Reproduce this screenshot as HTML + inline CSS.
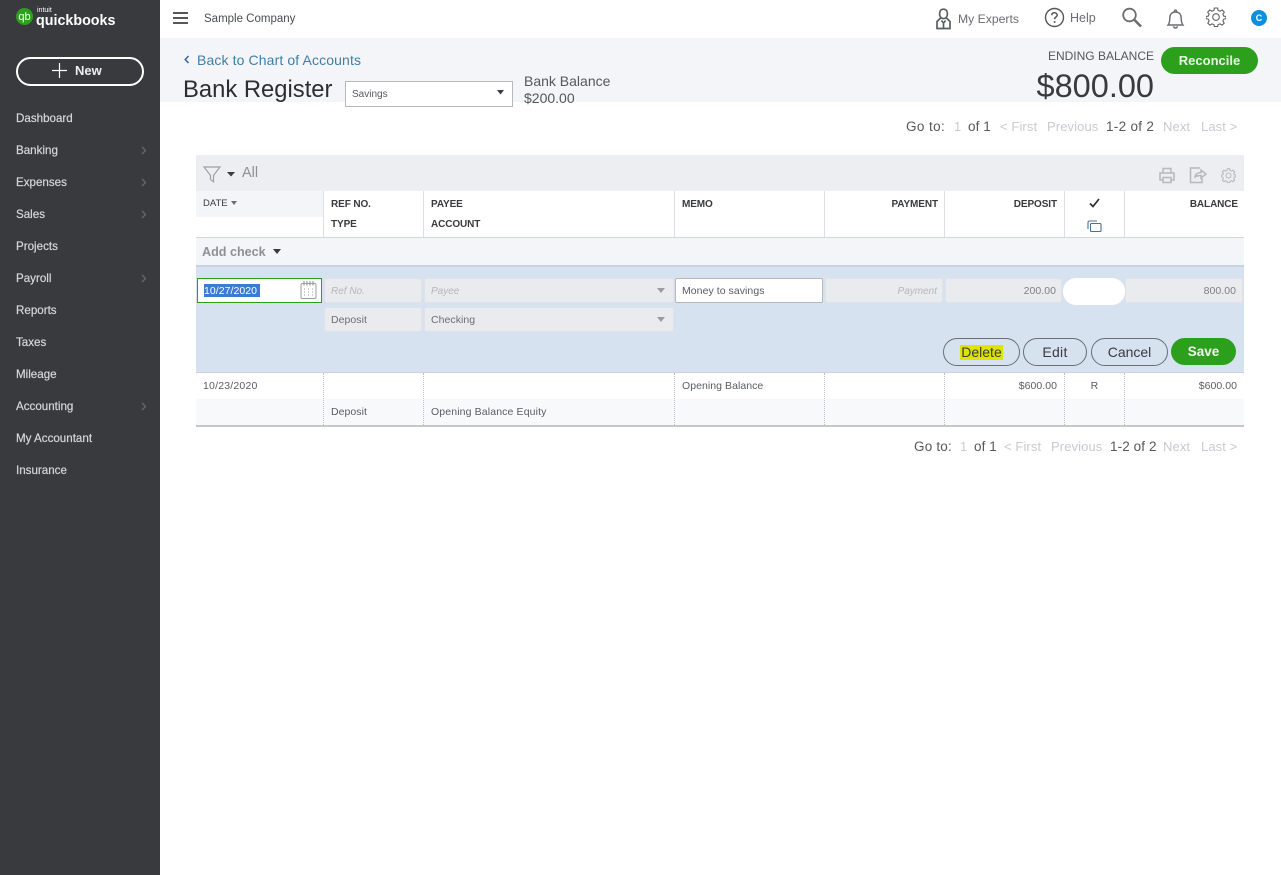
<!DOCTYPE html>
<html><head><meta charset="utf-8"><title>Bank Register</title>
<style>
html,body{margin:0;padding:0;background:#fff}
#p{position:relative;width:1281px;height:875px;overflow:hidden;background:#fff;font-family:"Liberation Sans",sans-serif;color:#393a3d}
#p div,#p svg{position:absolute}
.t{white-space:nowrap;line-height:16px;height:16px}
.r{text-align:right}
.n{font-size:11.6px;color:#d4d7dc;left:16px;font-weight:400;-webkit-text-stroke:.2px #d4d7dc}
.h{font-size:10px;font-weight:700;color:#393a3d;letter-spacing:-.1px}
.b{font-size:10.5px;color:#5a5c60;letter-spacing:.05px}
.pg{font-size:13.5px;color:#55575b;letter-spacing:.1px}
.pg.g{color:#c8cacf;font-size:13px}
.i{background:#e9ebee;border:1px solid #dfe2e7;box-sizing:border-box;border-radius:2px}
.pill{box-sizing:border-box;border:1px solid #6b6e73;border-radius:14px;height:28px;top:338px;text-align:center;font-size:14px;line-height:26px;color:#393a3d;background:#d7e2f0}
.v{width:1px;background:#dcdfe3}
.d{width:0;border-left:1px dotted #bcbfc4}
</style></head><body><div id="p">

<div style="left:0;top:0;width:160px;height:875px;background:#393a3d"></div>
<div style="left:16px;top:8px;width:17px;height:17px;border-radius:50%;background:#2ca01c"></div>
<div class="t" style="left:16px;top:9px;width:17px;text-align:center;font-size:11px;color:#fff;line-height:16px">qb</div>
<div class="t" style="left:37px;top:6px;font-size:7px;line-height:10px;height:10px;color:#fff">intuit</div>
<div class="t" style="left:36px;top:13px;font-size:14.3px;font-weight:700;color:#fff">quickbooks</div>

<div style="left:16px;top:57px;width:128px;height:29px;box-sizing:border-box;border:2px solid #fff;border-radius:15px"></div>
<svg style="left:52px;top:63px" width="15" height="15"><path d="M7.5 0V15M0 7.5H15" stroke="#fff" stroke-width="1.2"/></svg>
<div class="t" style="left:75px;top:63px;font-size:13px;font-weight:700;color:#eceef1">New</div>

<div class="t n" style="top:111px">Dashboard</div>
<div class="t n" style="top:143px">Banking</div>
<div class="t n" style="top:175px">Expenses</div>
<div class="t n" style="top:207px">Sales</div>
<div class="t n" style="top:239px">Projects</div>
<div class="t n" style="top:271px">Payroll</div>
<div class="t n" style="top:303px">Reports</div>
<div class="t n" style="top:335px">Taxes</div>
<div class="t n" style="top:367px">Mileage</div>
<div class="t n" style="top:399px">Accounting</div>
<div class="t n" style="top:431px">My Accountant</div>
<div class="t n" style="top:463px">Insurance</div>
<svg style="left:141px;top:146px" width="6" height="9"><path d="M1 1L4.5 4.5L1 8" fill="none" stroke="#65666a" stroke-width="1.4"/></svg>
<svg style="left:141px;top:178px" width="6" height="9"><path d="M1 1L4.5 4.5L1 8" fill="none" stroke="#65666a" stroke-width="1.4"/></svg>
<svg style="left:141px;top:210px" width="6" height="9"><path d="M1 1L4.5 4.5L1 8" fill="none" stroke="#65666a" stroke-width="1.4"/></svg>
<svg style="left:141px;top:274px" width="6" height="9"><path d="M1 1L4.5 4.5L1 8" fill="none" stroke="#65666a" stroke-width="1.4"/></svg>
<svg style="left:141px;top:402px" width="6" height="9"><path d="M1 1L4.5 4.5L1 8" fill="none" stroke="#65666a" stroke-width="1.4"/></svg>

<div style="left:173px;top:12px;width:15px;height:2px;background:#55575b"></div>
<div style="left:173px;top:17px;width:15px;height:2px;background:#55575b"></div>
<div style="left:173px;top:22px;width:15px;height:2px;background:#55575b"></div>
<div class="t" style="left:204px;top:11px;font-size:11.5px;color:#4a4c50">Sample Company</div>

<svg style="left:935px;top:8px" width="17" height="22" viewBox="0 0 17 22" fill="none" stroke="#5b5d61" stroke-width="1.7"><path d="M8.5 1.2C5.6 1.2 4.6 3.4 4.6 5.6C4.6 8.4 6 10.6 8.5 10.6C11 10.6 12.4 8.4 12.4 5.6C12.4 3.4 11.4 1.2 8.5 1.2Z"/><path d="M5.6 10L2 13.5V20.5H15V13.5L11.4 10"/><path d="M6.3 12.5L8.5 15L10.7 12.5M8.5 15V20"/></svg>
<div class="t" style="left:958px;top:11px;font-size:12.2px;color:#6b6c72">My Experts</div>
<svg style="left:1044px;top:7px" width="21" height="21" fill="none"><circle cx="10.5" cy="10.5" r="9" stroke="#55575b" stroke-width="1.4"/><path d="M7.8 8.2C7.8 6.6 9 5.8 10.5 5.8C12 5.8 13.2 6.7 13.2 8.1C13.2 9.9 10.6 10.1 10.6 12.2" stroke="#55575b" stroke-width="1.5"/><circle cx="10.6" cy="15" r="1" fill="#55575b"/></svg>
<div class="t" style="left:1070px;top:10px;font-size:12.5px;color:#6b6c72">Help</div>
<svg style="left:1121px;top:7px" width="22" height="21" fill="none" stroke="#6b6c72"><circle cx="8.5" cy="8" r="6.3" stroke-width="1.8"/><path d="M13 12.5L20 19.5" stroke-width="2.6"/></svg>
<svg style="left:1166px;top:8px" width="19" height="22" fill="none" stroke="#6b6c72" stroke-width="1.4"><path d="M2 17C3.6 15 3.8 13 3.8 10C3.8 6.6 5.6 4 9.5 4C13.4 4 15.2 6.6 15.2 10C15.2 13 15.4 15 17 17Z"/><path d="M8.4 3.6C8.4 1.6 10.6 1.6 10.6 3.6M7.6 18.2C8 20.6 11 20.6 11.4 18.2"/></svg>
<svg style="left:1206px;top:7px" width="20" height="20" viewBox="0 0 20 20" fill="none" stroke="#5f6165" stroke-width="1.1"><circle cx="10" cy="10" r="3.3"/><path d="M8.4 1H11.6L12.1 3.4L14.1 4.2L16.2 2.9L18.3 5.2L16.9 7.1L17.6 9L20 9.6V11.6L17.6 12.2L16.9 14.1L18.2 16.2L16 18.2L14.1 16.9L12.1 17.6L11.6 19.6H8.4L7.9 17.6L5.9 16.9L4 18.2L1.8 16.2L3.1 14.1L2.4 12.2L0 11.6V9.6L2.4 9L3.1 7.1L1.7 5.2L3.8 2.9L5.9 4.2L7.9 3.4Z"/></svg>
<div style="left:1251px;top:10px;width:16px;height:16px;border-radius:50%;background:#0d8fe0"></div>
<div class="t" style="left:1251px;top:10px;width:16px;text-align:center;font-size:9px;font-weight:700;color:#fff;line-height:17px">C</div>

<div style="left:160px;top:38px;width:1121px;height:64px;background:#f4f5f8"></div>
<svg style="left:184px;top:55px" width="6" height="9"><path d="M4.5 1L1.2 4.5L4.5 8" fill="none" stroke="#36689c" stroke-width="1.5"/></svg>
<div class="t" style="left:197px;top:52px;font-size:14px;color:#3f7fa8;letter-spacing:.12px">Back to Chart of Accounts</div>
<div class="t" style="left:183px;top:76px;height:28px;line-height:28px;font-size:23.8px;color:#2d2e31">Bank Register</div>
<div style="left:345px;top:81px;width:168px;height:26px;box-sizing:border-box;background:#fff;border:1px solid #b6b8bc"></div>
<div class="t" style="left:352px;top:87px;font-size:10px;color:#55575b">Savings</div>
<svg style="left:497px;top:90px" width="7" height="5"><path d="M0 0H7L3.5 4.5Z" fill="#393a3d"/></svg>
<div class="t" style="left:524px;top:73px;font-size:14px;color:#55575b">Bank Balance</div>
<div class="t" style="left:524px;top:90px;font-size:14px;color:#55575b">$200.00</div>
<div class="t r" style="left:1000px;width:154px;top:48px;font-size:12px;color:#55575b">ENDING BALANCE</div>
<div class="t r" style="left:1000px;width:154px;top:66px;height:40px;line-height:40px;font-size:32.5px;color:#393a3d">$800.00</div>
<div style="left:1161px;top:47px;width:97px;height:27px;border-radius:14px;background:#2ca01c"></div>
<div class="t" style="left:1161px;top:53px;width:97px;text-align:center;font-size:13px;font-weight:700;color:#e8f3e4">Reconcile</div>

<div class="t pg" style="left:906px;top:119px;letter-spacing:.4px">Go to:</div>
<div class="t pg g" style="left:954px;top:119px">1</div>
<div class="t pg" style="left:968px;top:119px">of 1</div>
<div class="t pg g" style="left:1000px;top:119px">&lt; First</div>
<div class="t pg g" style="left:1047px;top:119px">Previous</div>
<div class="t pg" style="left:1106px;top:119px;letter-spacing:.3px">1-2 of 2</div>
<div class="t pg g" style="left:1163px;top:119px">Next</div>
<div class="t pg g" style="left:1201px;top:119px">Last &gt;</div>

<div style="left:196px;top:155px;width:1048px;height:36px;background:#eceef1"></div>
<svg style="left:203px;top:166px" width="18" height="17" fill="none"><path d="M1 1H17L10.5 9.5V15.8L7.5 13.5V9.5Z" stroke="#9fa2a6" stroke-width="1.2"/></svg>
<svg style="left:227px;top:172px" width="8" height="5"><path d="M0 0H8L4 4.5Z" fill="#393a3d"/></svg>
<div class="t" style="left:242px;top:165px;font-size:14.5px;color:#8d9096">All</div>
<svg style="left:1159px;top:167px" width="16" height="17" fill="none" stroke="#b5b8bc" stroke-width="1.5"><path d="M4 6V1.5H12V6M4 13H1V6H15V13H12M4 10.5H12V15.5H4Z"/></svg>
<svg style="left:1189px;top:167px" width="18" height="17" fill="none" stroke="#b5b8bc" stroke-width="1.5"><path d="M11 1H1.5V15.5H13V11"/><path d="M6 10C6.5 7 9 5.5 12 5.5V3L17 7L12 11V8.5C9.5 8.5 7.5 9 6 10Z"/></svg>
<svg style="left:1221px;top:168px" width="15" height="15" viewBox="0 0 20 20" fill="none" stroke="#b5b8bc" stroke-width="1.4"><circle cx="10" cy="10" r="3.3"/><path d="M8.4 1H11.6L12.1 3.4L14.1 4.2L16.2 2.9L18.3 5.2L16.9 7.1L17.6 9L20 9.6V11.6L17.6 12.2L16.9 14.1L18.2 16.2L16 18.2L14.1 16.9L12.1 17.6L11.6 19.6H8.4L7.9 17.6L5.9 16.9L4 18.2L1.8 16.2L3.1 14.1L2.4 12.2L0 11.6V9.6L2.4 9L3.1 7.1L1.7 5.2L3.8 2.9L5.9 4.2L7.9 3.4Z"/></svg>

<div style="left:196px;top:191px;width:127px;height:26px;background:#f4f5f8"></div>
<div class="v" style="left:323px;top:191px;height:46px"></div>
<div class="v" style="left:423px;top:191px;height:46px"></div>
<div class="v" style="left:674px;top:191px;height:46px"></div>
<div class="v" style="left:824px;top:191px;height:46px"></div>
<div class="v" style="left:944px;top:191px;height:46px"></div>
<div class="v" style="left:1064px;top:191px;height:46px"></div>
<div class="v" style="left:1124px;top:191px;height:46px"></div>
<div class="t" style="left:203px;top:196px;font-size:9.5px;color:#393a3d">DATE</div>
<svg style="left:231px;top:201px" width="6" height="4"><path d="M0 0H6L3 4Z" fill="#6b6e73"/></svg>
<div class="t h" style="left:331px;top:197px">REF NO.</div>
<div class="t h" style="left:331px;top:217px">TYPE</div>
<div class="t h" style="left:431px;top:197px">PAYEE</div>
<div class="t h" style="left:431px;top:217px">ACCOUNT</div>
<div class="t h" style="left:682px;top:197px">MEMO</div>
<div class="t h r" style="left:838px;width:100px;top:197px">PAYMENT</div>
<div class="t h r" style="left:957px;width:100px;top:197px">DEPOSIT</div>
<div class="t h r" style="left:1138px;width:100px;top:197px">BALANCE</div>
<svg style="left:1089px;top:198px" width="11" height="10"><path d="M1 5.5L4 8.5L10 1" fill="none" stroke="#2d2e31" stroke-width="1.7"/></svg>
<svg style="left:1087px;top:220px" width="15" height="13" fill="none" stroke="#4a7493" stroke-width="1.1"><path d="M1 9V2.5C1 1.7 1.7 1 2.5 1H10"/><rect x="3.5" y="3.5" width="10.5" height="8" rx="1"/></svg>

<div style="left:196px;top:237px;width:1048px;height:1px;background:#d4d7dc"></div>
<div style="left:196px;top:238px;width:1048px;height:27px;background:#f4f5f8"></div>
<div class="t" style="left:202px;top:244px;font-size:12.6px;font-weight:700;color:#8d9096">Add check</div>
<svg style="left:273px;top:249px" width="8" height="6"><path d="M0 0H8L4 5Z" fill="#393a3d"/></svg>

<div style="left:196px;top:265px;width:1048px;height:108px;background:#d7e2f0;border-top:2px solid #c9d4e2;box-sizing:border-box"></div>
<div style="left:197px;top:278px;width:125px;height:25px;box-sizing:border-box;background:#fff;border:1px solid #2ca01c"></div>
<div style="left:204px;top:284px;width:56px;height:13px;background:#3a7bd5"></div>
<div class="t" style="left:204px;top:283px;font-size:10.5px;color:#fff;letter-spacing:.05px">10/27/2020</div>
<svg style="left:300px;top:280px" width="17" height="20" fill="none" stroke="#9a9ca0" stroke-width="1"><rect x="1" y="3.5" width="15" height="15" rx="1.5"/><path d="M4 5.5V1M7 5.5V1M10 5.5V1M13 5.5V1" stroke-width="1.2"/><path d="M4 9H6M8 9H10M12 9H14M4 12H6M8 12H10M12 12H14M4 15H6M8 15H10M12 15H14" stroke-dasharray="1 1"/></svg>

<div class="i" style="left:324px;top:278px;width:98px;height:25px"></div>
<div class="t" style="left:331px;top:284px;font-size:10px;font-style:italic;color:#b4b7bb">Ref No.</div>
<div class="i" style="left:424px;top:278px;width:250px;height:25px"></div>
<div class="t" style="left:431px;top:284px;font-size:10px;font-style:italic;color:#b4b7bb">Payee</div>
<svg style="left:657px;top:288px" width="8" height="5"><path d="M0 0H8L4 5Z" fill="#9a9ca0"/></svg>
<div class="i" style="left:324px;top:307px;width:98px;height:25px"></div>
<div class="t b" style="left:331px;top:312px;color:#6b6e73">Deposit</div>
<div class="i" style="left:424px;top:307px;width:250px;height:25px"></div>
<div class="t b" style="left:431px;top:312px;color:#6b6e73">Checking</div>
<svg style="left:657px;top:317px" width="8" height="5"><path d="M0 0H8L4 5Z" fill="#9a9ca0"/></svg>

<div style="left:675px;top:278px;width:148px;height:25px;box-sizing:border-box;background:#fff;border:1px solid #b6b8bc;border-radius:2px"></div>
<div class="t b" style="left:682px;top:283px">Money to savings</div>
<div class="i" style="left:825px;top:278px;width:118px;height:25px"></div>
<div class="t r" style="left:837px;width:100px;top:284px;font-size:10px;font-style:italic;color:#b4b7bb">Payment</div>
<div class="i" style="left:945px;top:278px;width:117px;height:25px"></div>
<div class="t b r" style="left:956px;width:100px;top:283px;color:#7d8085">200.00</div>
<div style="left:1063px;top:278px;width:62px;height:27px;background:#fff;border-radius:13px"></div>
<div class="i" style="left:1125px;top:278px;width:118px;height:25px"></div>
<div class="t b r" style="left:1136px;width:100px;top:283px;color:#7d8085">800.00</div>

<div class="pill" style="left:943px;width:77px"></div>
<div style="left:960px;top:345px;width:43px;height:15px;background:#dfe300"></div>
<div class="t" style="left:943px;top:344px;width:77px;text-align:center;font-size:14px;color:#393a3d">Delete</div>
<div class="pill" style="left:1023px;width:64px;letter-spacing:.3px">Edit</div>
<div class="pill" style="left:1091px;width:77px">Cancel</div>
<div style="left:1171px;top:338px;width:65px;height:27px;border-radius:14px;background:#2ca01c"></div>
<div class="t" style="left:1171px;top:344px;width:65px;text-align:center;font-size:13.5px;font-weight:700;color:#eef6ec">Save</div>

<div style="left:196px;top:372px;width:1048px;height:1px;background:#cdd2d9"></div>
<div style="left:196px;top:399px;width:1048px;height:26px;background:#f8f9fa"></div>
<div style="left:196px;top:425px;width:1048px;height:2px;background:#c4c7cc"></div>
<div class="d" style="left:323px;top:373px;height:52px"></div>
<div class="d" style="left:423px;top:373px;height:52px"></div>
<div class="d" style="left:674px;top:373px;height:52px"></div>
<div class="d" style="left:824px;top:373px;height:52px"></div>
<div class="d" style="left:944px;top:373px;height:52px"></div>
<div class="d" style="left:1064px;top:373px;height:52px"></div>
<div class="d" style="left:1124px;top:373px;height:52px"></div>
<div class="t b" style="left:203px;top:378px;letter-spacing:.2px">10/23/2020</div>
<div class="t b" style="left:682px;top:378px">Opening Balance</div>
<div class="t b r" style="left:957px;width:100px;top:378px">$600.00</div>
<div class="t b" style="left:1064px;width:61px;text-align:center;top:378px">R</div>
<div class="t b r" style="left:1137px;width:100px;top:378px">$600.00</div>
<div class="t b" style="left:331px;top:404px">Deposit</div>
<div class="t b" style="left:431px;top:404px;letter-spacing:.13px">Opening Balance Equity</div>

<div class="t pg" style="left:914px;top:439px;letter-spacing:.2px">Go to:</div>
<div class="t pg g" style="left:960px;top:439px">1</div>
<div class="t pg" style="left:974px;top:439px">of 1</div>
<div class="t pg g" style="left:1004px;top:439px">&lt; First</div>
<div class="t pg g" style="left:1051px;top:439px">Previous</div>
<div class="t pg" style="left:1110px;top:439px">1-2 of 2</div>
<div class="t pg g" style="left:1163px;top:439px">Next</div>
<div class="t pg g" style="left:1201px;top:439px">Last &gt;</div>

</div></body></html>
